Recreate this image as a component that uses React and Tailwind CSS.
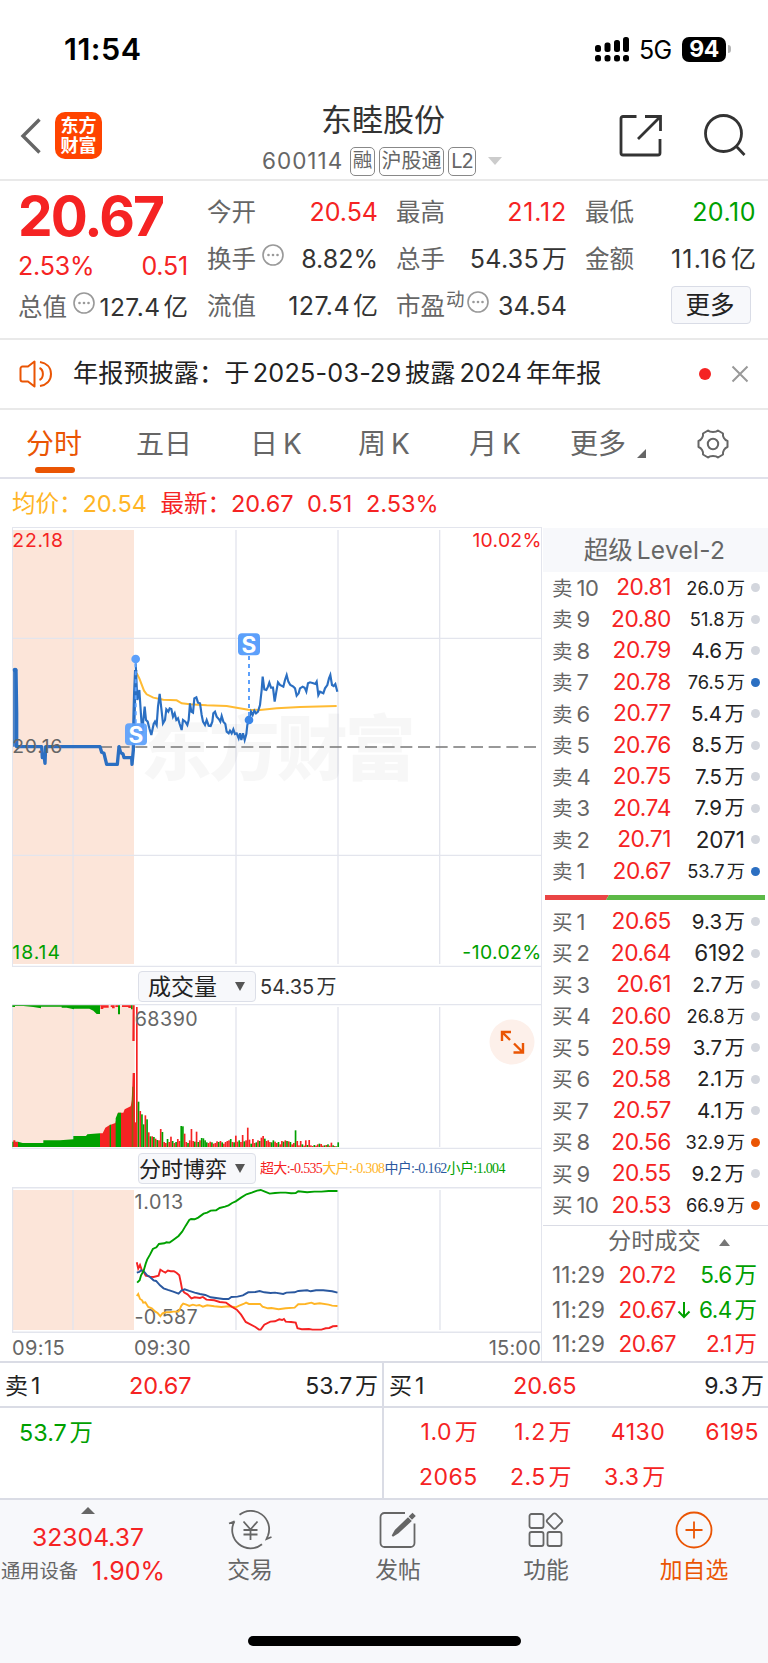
import clsx from "clsx";

const asks = [
  ["卖10", "20.81", "26.0", "gray"],
  ["卖9", "20.80", "51.8", "gray"],
  ["卖8", "20.79", "4.6", "gray"],
  ["卖7", "20.78", "76.5", "blue"],
  ["卖6", "20.77", "5.4", "gray"],
  ["卖5", "20.76", "8.5", "gray"],
  ["卖4", "20.75", "7.5", "gray"],
  ["卖3", "20.74", "7.9", "gray"],
  ["卖2", "20.71", "2071", "gray"],
  ["卖1", "20.67", "53.7", "blue"],
];

const bids = [
  ["买1", "20.65", "9.3", "gray"],
  ["买2", "20.64", "6192", "gray"],
  ["买3", "20.61", "2.7", "gray"],
  ["买4", "20.60", "26.8", "gray"],
  ["买5", "20.59", "3.7", "gray"],
  ["买6", "20.58", "2.1", "gray"],
  ["买7", "20.57", "4.1", "gray"],
  ["买8", "20.56", "32.9", "orange"],
  ["买9", "20.55", "9.2", "gray"],
  ["买10", "20.53", "66.9", "orange"],
];

// one bar per minute: height, sign is the colour (+ red, - green)
const volumes = [
  420, -136, 108, -98, -68, 95, -83, 44, -32, 32, -30, 25, -21, 20, 54, -45, 15, 12, -24, 15, 31, -18, 12,
  -15, 24, 18, -63, -62, 40, 15, -12, 20, 54, 18, -16, 46, -15, 20, -27, -26, -20, -14, 12, 16, -14, 10, 12,
  17, -15, 18, -14, 10, 15, 18, 20, -24, 15, -14, 34, 16, -20, 15, 36, -17, 20, 58, 22, -10, 24, 12, -14,
  20, -18, 28, 33, -25, 18, 20, 15, -14, -20, 16, 12, -15, 8, 18, -16, 20, -18, 17, -15, 8, 12, -50, 18, 5,
  18, -8, 4, 20, -6, 21, 5, 3, -6, 4, 8, -10, 9, 4, -5, 6, -8, 4, 13, -5, 3, -2, -14,
];

const priceLine =
  "407,430 412,540 418,510 424,600 427,640 430,600 434,560 438,600 443,605 448,625 454,645 461,612 465,605 470,615 474,560 479,522 484,565 489,610 495,600 499,568 505,575 509,565 514,567 519,590 524,580 529,600 534,595 539,612 545,630 549,600 556,605 562,615 566,600 570,550 574,575 579,578 583,535 589,532 594,548 600,550 605,585 609,605 615,615 620,600 626,617 632,618 637,605 640,580 645,575 650,590 657,598 661,605 665,588 670,605 676,612 680,635 686,640 690,632 695,640 700,628 705,642 710,640 716,655 720,640 724,660 729,640 734,660 739,642 742,615 747,600 753,575 758,585 763,572 768,580 774,575 780,555 785,510 788,470 793,508 799,510 804,500 808,488 813,503 819,503 824,545 829,515 834,487 840,495 850,500 855,480 860,465 865,485 871,495 880,500 885,505 890,527 896,520 900,505 908,500 914,503 919,515 924,490 930,487 940,490 946,492 950,485 955,525 960,515 970,520 975,505 982,495 987,475 991,465 996,495 1001,498 1006,492 1012,515";

const averageLine =
  "410,460 418,475 432,512 440,523 460,533 490,539 530,541 545,550 570,553 620,556 680,558 710,563 745,569 780,570 830,565 900,561 1010,558";

const auctionLine =
  "42,450 48,450 50,578 50,680 125,680 127,713 133,713 135,730 137,680 300,680 305,697 312,700 315,713 320,733 352,733 357,680 362,698 369,702 372,713 395,713 396,733 400,690 402,590 404,520 407,450";

function Num({ children, unit = "万" }) {
  return (
    <span className="whitespace-nowrap">
      {children}
      <span className="ml-[0.12em] tracking-normal">{unit}</span>
    </span>
  );
}

function Dots({ className }) {
  return (
    <svg viewBox="0 0 22 22" className={clsx("h-[22px] w-[22px] shrink-0", className)} fill="none" stroke="#999" strokeWidth="1.6">
      <circle cx="11" cy="11" r="10" />
      <g fill="#999" stroke="none">
        <circle cx="6.5" cy="11" r="1.3" />
        <circle cx="11" cy="11" r="1.3" />
        <circle cx="15.5" cy="11" r="1.3" />
      </g>
    </svg>
  );
}

function StatusBar() {
  return (
    <div className="flex h-[98px] items-center justify-between pr-[37px] pl-[64px] text-black">
      <span className="text-[30.500px] font-semibold tracking-[0.5px]">11:54</span>
      <div className="flex items-center">
        <svg width="35" height="25" viewBox="0 0 35 25">
          <rect x="0" y="8" width="6" height="7" rx="2.5" />
          <rect x="9.5" y="5.500" width="6" height="9.500" rx="2.5" />
          <rect x="19" y="3" width="6" height="12" rx="2.5" />
          <rect x="28" y="0" width="6" height="15" rx="2.5" />
          <rect x="0" y="18" width="6" height="6.500" rx="2.5" />
          <rect x="9.5" y="18" width="6" height="6.500" rx="2.5" />
          <rect x="19" y="18" width="6" height="6.500" rx="2.5" />
          <rect x="28" y="18" width="6" height="6.500" rx="2.5" />
        </svg>
        <span className="mt-[2px] ml-[9px] w-[34px] text-[25px] tracking-[-0.6px]">5G</span>
        <span className="ml-[9px] flex h-[25px] w-[44px] items-center justify-center rounded-[7px] bg-black text-[23px] font-bold tracking-[-0.6px] text-white">
          94
        </span>
        <span className="ml-[2px] h-[8px] w-[3px] rounded-r-full bg-[#b5b5b5]" />
      </div>
    </div>
  );
}

function Header() {
  return (
    <div className="flex h-[83px] items-start border-b-2 border-[#e9e9e9]">
      <svg width="22" height="38" viewBox="0 0 22 38" className="mt-[19px] ml-[20px]" fill="none" stroke="#666" strokeWidth="3.4">
        <path d="M19.500 2.500 3 19l16.500 16.500" />
      </svg>
      <div className="mt-[14px] ml-[13px] flex h-[47px] w-[47px] flex-col items-center justify-center rounded-[10px] bg-[#ff4400] text-[18px] leading-[20px] font-bold text-white">
        <span>东方</span>
        <span>财富</span>
      </div>
      <div className="ml-[160px] flex w-[242px] flex-col">
        <span className="ml-[59px] h-[44px] text-[31px] leading-[44px] text-[#333]">东睦股份</span>
        <div className="mt-[4px] flex h-[30px] items-center text-[#666]">
          <span className="w-[88px] text-[22.500px] tracking-[1px]">600114</span>
          <span className="flex h-[29px] w-[25px] items-center justify-center rounded-[5px] border-[1.500px] border-[#888] text-[19.500px]">融</span>
          <span className="ml-[4px] flex h-[29px] w-[65px] items-center justify-center rounded-[5px] border-[1.500px] border-[#888] text-[20px]">沪股通</span>
          <span className="ml-[4px] flex h-[29px] w-[28px] items-center justify-center rounded-[5px] border-[1.500px] border-[#888] text-[20px] tracking-[-1px]">L2</span>
          <svg width="14" height="8" className="ml-[12px] shrink-0">
            <path d="M0 0h14L7 8z" fill="#ccc" />
          </svg>
        </div>
      </div>
      <svg width="44" height="44" viewBox="0 0 44 44" className="mt-[16px] ml-[115px]" fill="none" stroke="#333" strokeWidth="2.8">
        <path d="M17.500 2.500H4a2 2 0 0 0-2 2V39a2 2 0 0 0 2 2h35a2 2 0 0 0 2-2V25M41.500 17V2.500H26M41 3 19 25" />
      </svg>
      <svg width="44" height="44" viewBox="0 0 44 44" className="mt-[15px] ml-[40px]" fill="none" stroke="#333" strokeWidth="2.8">
        <circle cx="20.500" cy="20.500" r="18" />
        <path d="m33 33 8.500 9" />
      </svg>
    </div>
  );
}

function Cell({ label, children, extra, color = "text-[#333]", track = "tracking-[0px]" }) {
  return (
    <div className="flex h-[47px] items-center justify-between">
      <span className="-ml-px flex items-center text-[24.500px] text-[#666]">
        {label}
        {extra}
      </span>
      <span className={clsx("-mr-px text-[25px]", color, track)}>{children}</span>
    </div>
  );
}

function Quote() {
  return (
    <div className="grid h-[159px] grid-cols-4 gap-x-5 border-b-2 border-[#e9e9e9] pt-[8px] pr-[13px] pl-[19px]">
      <div className="text-[#f52323]">
        <div className="-ml-px flex h-[54px] items-center text-[55px] font-bold tracking-[-1.900px]">20.67</div>
        <div className="-ml-px flex h-[47px] items-center justify-between text-[25px] tracking-[-0.2px]">
          <span>2.53%</span>
          <span>0.51</span>
        </div>
        <div className="-ml-px flex h-[34px] items-center justify-between text-[24.500px] text-[#333]">
          <span className="text-[#666]">总值</span>
          <Dots className="mb-[9px] ml-[6px]" />
          <span className="ml-auto tracking-[0.5px]">
            <Num unit="亿">127.4</Num>
          </span>
        </div>
      </div>
      <div>
        <Cell label="今开" color="text-[#f52323]">20.54</Cell>
        <Cell label="换手" extra={<Dots className="mb-[9px] ml-[6px]" />}>8.82%</Cell>
        <Cell label="流值" track="tracking-[0.4px]">
          <Num unit="亿">127.4</Num>
        </Cell>
      </div>
      <div>
        <Cell label="最高" color="text-[#f52323]" track="tracking-[0.8px]">21.12</Cell>
        <Cell label="总手" track="tracking-[0.3px]">
          <Num>54.35</Num>
        </Cell>
        <Cell
          label="市盈"
          extra={
            <>
              <span className="mb-[14px] ml-[1px] text-[18.500px]">动</span>
              <Dots className="mb-[9px] ml-[2px]" />
            </>
          }
        >
          34.54
        </Cell>
      </div>
      <div>
        <Cell label="最低" color="text-[#00a000]" track="tracking-[0.5px]">20.10</Cell>
        <Cell label="金额" track="tracking-[1.200px]">
          <Num unit="亿">11.16</Num>
        </Cell>
        <div className="flex h-[47px] items-center justify-end pr-[4px] pb-[3px]">
          <span className="flex h-[38px] w-[80px] items-center justify-center rounded-[4px] border-[1.500px] border-[#d9dce6] bg-[#f7f8fb] pr-[2px] text-[24.500px] text-[#222]">更多</span>
        </div>
      </div>
    </div>
  );
}

function Notice() {
  return (
    <div className="flex h-[70px] items-center border-b-2 border-[#e9e9e9] pl-[19px]">
      <svg width="34" height="28" viewBox="0 0 34 28" fill="none" stroke="#ea5504" strokeWidth="2" strokeLinejoin="round">
        <path d="M15.500 1.500v25L9 21.500H3.500a2 2 0 0 1-2-2v-11a2 2 0 0 1 2-2H9z" />
        <path d="M20.500 8c4.500 2 4.500 10 0 12M21 2c6 1 11 5 11 12s-5 11-11 12" />
      </svg>
      <span className="ml-[20px] w-[541px] text-[25.200px] whitespace-nowrap text-[#222]">
        年报预披露：于<span className="mx-[3.500px] tracking-[0.2px]">2025-03-29</span>披露<span className="mx-[4px] tracking-[0px]">2024</span>年年报
      </span>
      <span className="ml-[85px] h-[12px] w-[12px] rounded-full bg-[#f52323]" />
      <svg width="18" height="18" viewBox="0 0 18 18" className="ml-[20px]" stroke="#999" strokeWidth="2">
        <path d="m1.500 1.500 15 15M16.500 1.500l-15 15" />
      </svg>
    </div>
  );
}

function Tabs() {
  return (
    <div className="flex h-[69px] items-center border-b-2 border-[#e0e1ea] text-[28px] text-[#666]">
      <div className="ml-[26px] flex h-full w-[110px] flex-col text-[#ea5504]">
        <span className="mt-[13px] h-[42px] leading-[42px]">分时</span>
        <span className="mt-[2px] ml-[9px] h-[6px] w-[40px] rounded-full bg-[#ea5504]" />
      </div>
      <span className="mt-px w-[114px]">五日</span>
      <span className="mt-px w-[108px]">日<span className="ml-[5px]">K</span></span>
      <span className="mt-px w-[111px]">周<span className="ml-[5px]">K</span></span>
      <span className="mt-px w-[101px]">月<span className="ml-[5px]">K</span></span>
      <span className="mt-px w-[67px]">更多</span>
      <svg width="9" height="9" className="mt-[19px]">
        <path d="M9 0v9H0z" fill="#666" />
      </svg>
      <svg width="34" height="32" viewBox="0 0 34 32" className="ml-[50px]" fill="none" stroke="#666" strokeWidth="2" strokeLinejoin="round">
        <path d="M12 2.500c2 2 8 2 10 0l5 3c-.6 3 1.500 6.500 4.500 7.500v6c-3 1-5 4.500-4.500 7.500l-5 3c-2-2-8-2-10 0l-5-3c.6-3-1.500-6.500-4.500-7.500v-6c3-1 5-4.500 4.500-7.500z" />
        <circle cx="17" cy="16" r="5.200" />
      </svg>
    </div>
  );
}

function PriceChart() {
  return (
    <svg width="529" height="440" viewBox="36 21 1587 1320" className="block shrink-0">
      <rect x="37" y="30" width="365" height="1302" fill="#fce5d9" />
      <g stroke="#e3e5ed" strokeWidth="4">
        <path d="M37 22H1625M37 22V1341M219 30V1332M708 30V1332M1014 30V1332M1319 30V1332M37 355H1625M37 1006H1625M37 1339H1625" />
      </g>
      <text x="422" y="762" fontSize="213" letterSpacing="-9" fontWeight="900" fill="#000" fillOpacity="0.03">东方财富</text>
      <path d="M300 681H1620" stroke="#777" strokeWidth="5" strokeDasharray="36 17" />
      <polyline points={averageLine} fill="none" stroke="#ffbb33" strokeWidth="6" />
      <polyline points={auctionLine} fill="none" stroke="#2b6fc2" strokeWidth="10" strokeLinejoin="round" />
      <path d="M42 450V680" stroke="#2b6fc2" strokeWidth="5" />
      <polyline points={priceLine} fill="none" stroke="#2b6fc2" strokeWidth="6.500" />
      <circle cx="45" cy="450" r="7" fill="#2b6fc2" />
      <g stroke="#5ca0fb" strokeWidth="6" strokeDasharray="12 12">
        <path d="M407 430V610M747 408V590" />
      </g>
      <g fill="#5ca0fb">
        <circle cx="407" cy="417" r="13" />
        <circle cx="747" cy="600" r="13" fill="#3a86e8" />
        <rect x="375" y="610" width="66" height="66" rx="12" fillOpacity="0.93" />
        <rect x="714" y="340" width="66" height="66" rx="12" />
      </g>
      <g fill="#fff" fontSize="68" fontWeight="700" textAnchor="middle">
        <text x="408" y="668">S</text>
        <text x="747" y="398">S</text>
      </g>
      <g fontSize="58">
        <text x="37" y="80" fill="#f52323" letterSpacing="2.500">22.18</text>
        <text x="37" y="699" fill="#666" letterSpacing="2">20.16</text>
        <text x="37" y="1318" fill="#00a000" letterSpacing="3">18.14</text>
        <text x="1625" y="80" fill="#f52323" letterSpacing=".8" textAnchor="end">10.02%</text>
        <text x="1625" y="1318" fill="#00a000" letterSpacing="1.200" textAnchor="end">-10.02%</text>
      </g>
    </svg>
  );
}

function Picker({ children, className }) {
  return (
    <div className={clsx("ml-[126px] flex h-[31px] w-[118px] items-center justify-between rounded-[4px] border-[1.500px] border-[#dcdfe8] bg-[#f7f8fb] pr-[10px] text-[#222]", className)}>
      <span className="mt-[2px]">{children}</span>
      <svg width="10" height="9">
        <path d="M0 0h10L5 9z" fill="#555" />
      </svg>
    </div>
  );
}

function VolumeChart() {
  return (
    <svg width="529" height="145" viewBox="36 132 1587 435" className="block">
      <rect x="37" y="136" width="367" height="425" fill="#fce5d9" />
      <path d="M37 134H1625M37 134V567M219 141V561M708 141V561M1014 141V561M1319 141V561M37 565H1625" stroke="#e3e5ed" strokeWidth="4" />
      {/* call auction, unmatched on top and matched at the bottom */}
      <path d="M37 136H300V162H290L280 152 268 146H222V148L200 143H185V140H123V145L100 141 70 138H45V141H37zM354 136H360V163H354zM393 136H398V148H393z" fill="#00a000" />
      <path d="M300 136H326V143H310V147H302V140zM332 136H344V145H336V141H332zM346 136H354V141H346zM366 136H393V144H385V141H366zM398 136H404V243H397z" fill="#f52323" />
      <path d="M37 561V545H54L68 549H130V541H180L220 538V528H258L262 523 300 520V561z" fill="#00a000" />
      <path d="M40 561V541H46V546H54V561z" fill="#f52323" />
      <path d="M300 561V520H308L316 503 328 496 346 489 354 458H370L374 448 392 439 396 420 398 339H405V561z" fill="#f52323" />
      <path d="M347 561V475L354 458H363V561zM329 561V494H333V561z" fill="#00a000" />
      <path d="M395 561V420L397 380H400V561z" fill="#8a6410" />
      <path d="M404 487H410V561H404z" fill="#f52323" />
      {volumes.map((v, i) => (
        <rect key={i} x={408 + i * 5.12} y={561 - Math.abs(v)} width="5" height={Math.abs(v)} fill={v > 0 ? "#f52323" : "#00a000"} />
      ))}
      <text x="404" y="199" fill="#666" fontSize="59" letterSpacing="1.500">68390</text>
    </svg>
  );
}

function ForceChart() {
  return (
    <svg width="529" height="146" viewBox="0 0 529 146" className="block shrink-0">
      <rect x="0.500" y="3" width="121.500" height="140" fill="#fce5d9" />
      <path d="M0 .7H530M.5 0V146M61 3V143M224 3V143M326 3V143M428 3V143M0 145.300H530" stroke="#e3e5ed" strokeWidth="1.400" />
      <g fill="#666" fontSize="19.700">
        <text x="122.500" y="22.300" letterSpacing=".7">1.013</text>
        <text x="122.500" y="137" letterSpacing=".3">-0.587</text>
      </g>
      <g transform="translate(-12 -36.700) scale(.35714 .33333)" fill="none" strokeWidth="1.900">
        <polyline vectorEffect="non-scaling-stroke" stroke="#ffb526" points="383,437 387,431 392,446 398,450 401,457 407,456 415,470 425,474 435,484 442,489 449,498 455,489 465,486 475,486 485,484 500,484 505,473 508,466 513,460 522,463 530,467 540,463 550,466 558,464 568,469 580,465 600,468 620,470 640,468 660,471 670,466 682,461 689,457 697,461 728,461 735,469 750,474 760,473 780,477 800,474 825,472 835,462 855,461 872,457 880,461 895,459 920,463 930,466 945,467" />
        <polyline vectorEffect="non-scaling-stroke" stroke="#f52323" points="383,336 387,355 392,344 398,362 403,366 408,376 420,379 430,380 444,376 449,358 456,363 463,367 470,361 478,363 487,363 495,368 502,375 506,395 510,418 516,427 525,432 536,444 545,441 560,443 568,440 578,448 600,450 615,455 633,457 650,470 663,478 675,493 688,515 697,520 715,530 725,538 730,538 740,523 757,514 770,513 782,507 790,509 795,506 800,514 815,515 828,517 833,534 845,537 865,536 875,538 900,538 912,534 922,533 932,528 945,527" />
        <polyline vectorEffect="non-scaling-stroke" stroke="#2a589f" points="383,367 390,365 395,360 402,362 412,375 420,380 430,390 437,392 448,405 458,414 470,419 485,424 500,430 508,421 517,417 530,422 545,427 560,431 575,434 590,441 610,444 625,446 640,446 648,440 665,439 680,435 695,426 715,425 727,422 740,426 758,428 770,427 793,431 802,427 825,426 835,422 860,420 870,423 885,420 905,420 930,423 945,427" />
        <polyline vectorEffect="non-scaling-stroke" stroke="#00a000" points="384,397 391,390 395,375 402,362 408,340 412,328 420,313 428,296 438,291 445,281 460,279 466,276 475,277 485,269 500,257 510,244 520,226 530,209 535,206 545,207 555,202 570,190 580,187 590,181 605,180 615,173 630,169 640,165 650,158 660,153 675,142 690,132 705,127 720,121 730,119 740,123 755,130 770,128 785,127 800,127 815,129 828,128 835,123 860,126 880,124 900,124 920,122 945,122" />
      </g>
    </svg>
  );
}

const dotColor = { gray: "bg-[#d3d6dd]", blue: "bg-[#2b6fc2]", orange: "bg-[#ea5504]" };

function BookRow({ row }) {
  const [name, price, vol, dot] = row;
  const isPlain = !vol.includes(".");
  const isWide = vol.length === 4 && !isPlain;
  return (
    <div className="flex h-[31.500px] items-center pr-[8px] pl-[9px]">
      <span className="w-[52px] text-[20.500px] whitespace-nowrap text-[#666]">
        {name[0]}
        <span className="ml-[4px] text-[22px] tracking-[-0.4px]">{name.slice(1)}</span>
      </span>
      <span className="w-[67px] text-right text-[22.700px] tracking-[-0.4px] text-[#f52323]">{price}</span>
      <span className={clsx("w-[74px] text-right text-[#222]", isPlain ? "text-[22.500px]" : isWide ? "text-[18.300px]" : "text-[20.500px]")}>
        {isPlain ? vol : <Num>{vol}</Num>}
      </span>
      <span className={clsx("ml-auto h-[9px] w-[9px] rounded-full", dotColor[dot])} />
    </div>
  );
}

function OrderBook() {
  return (
    <div className="w-[227px] border-l-[1.500px] border-[#e3e5ed] pl-[1px]">
      <div className="mt-[1px] flex h-[44px] items-center justify-center bg-[#f7f8fb] pr-[2px] text-[24.500px] text-[#666]">
        超级<span className="ml-[4px] tracking-[0.3px]">Level-2</span>
      </div>
      {asks.map((row) => (
        <BookRow key={row[0]} row={row} />
      ))}
      <svg width="220" height="5" className="mt-[8px] ml-[2px] block">
        <path d="M0 0H64L61 5H0z" fill="#ea4545" />
        <path d="M64 0H220V5H61z" fill="#5cb947" />
      </svg>
      <div className="h-[6px]" />
      {bids.map((row) => (
        <BookRow key={row[0]} row={row} />
      ))}
      <div className="mt-[4px] flex h-[33px] items-center border-t-[1.500px] border-[#dadce5] pl-[65px] text-[23.200px] text-[#666]">
        分时成交
        <svg width="11" height="7" className="ml-[18px]">
          <path d="M0 7h11L5.500 0z" fill="#777" />
        </svg>
      </div>
      {[
        ["20.72", "", "5.6", "text-[#00a000]"],
        ["20.67", "↓", "6.4", "text-[#00a000]"],
        ["20.67", "", "2.1", "text-[#f52323]"],
      ].map(([price, arrow, vol, color], i) => (
        <div key={i} className="flex h-[34.500px] items-center pl-[9px] text-[22.500px]">
          <span className="w-[54px] tracking-[0.1px] text-[#666]">11:29</span>
          <span className="w-[70px] text-right tracking-[-0.5px] text-[#f52323]">{price}</span>
          <span className="w-[16px]">
            {arrow && (
              <svg width="14" height="18" viewBox="0 0 14 18" className="ml-[1px]" fill="none" stroke="#00a000" strokeWidth="2">
                <path d="M7 1v15M1.500 10.500 7 16l5.500-5.500" />
              </svg>
            )}
          </span>
          <span className={clsx("w-[65px] text-right tracking-[-0.5px]", color)}>
            <Num>{vol}</Num>
          </span>
        </div>
      ))}
    </div>
  );
}

function Market() {
  return (
    <div className="flex h-[834px]">
      <div className="flex w-[541px] flex-col pl-[12px]">
        <PriceChart />
        <div className="flex h-[37px] shrink-0 items-center pt-px">
          <Picker className="pl-[9px] text-[23px]">成交量</Picker>
          <span className="mt-[2px] ml-[4px] text-[20px] text-[#333]">
            <Num>54.35</Num>
          </span>
        </div>
        <div className="relative shrink-0">
          <VolumeChart />
          <svg width="46" height="46" viewBox="0 0 46 46" className="absolute top-[15px] left-[477px]" fill="none" stroke="#ea5504" strokeWidth="2.400">
            <circle cx="23" cy="23" r="22.500" fill="#fdf0ea" stroke="none" />
            <path d="M13 22V13H22M13.500 13.500 21 21M34 24V33.500H24.500M33.500 33 25 24.500" />
          </svg>
        </div>
        <div className="flex h-[38px] shrink-0 items-center">
          <Picker className="text-[22px]">分时博弈</Picker>
          <span className="mt-[1px] ml-[4px] font-['Liberation_Serif','Noto_Sans_CJK_SC',serif] text-[14px] tracking-[-0.65px] whitespace-nowrap">
            <span className="text-[#f52323]">超大:-0.535</span>
            <span className="text-[#ffb526]">大户:-0.308</span>
            <span className="text-[#2a589f]">中户:-0.162</span>
            <span className="text-[#00a000]">小户:1.004</span>
          </span>
        </div>
        <ForceChart />
        <div className="flex h-[28px] items-center pt-[2px] text-[20px] tracking-[0.2px] text-[#666]">
          <span className="w-[122px] tracking-[0.4px]">09:15</span>
          <span>09:30</span>
          <span className="ml-auto">15:00</span>
        </div>
      </div>
      <OrderBook />
    </div>
  );
}

function TopOfBook({ name, price, vol }) {
  return (
    <div className="flex h-[45px] items-center border-b-2 border-[#dadce5] pt-[3px] pr-[4px] pl-[5px] text-[23px] text-[#222]">
      <span className="w-[124px]">
        {name}
        <span className="ml-[3px]">1</span>
      </span>
      <span className="text-[23.500px] text-[#f52323]">{price}</span>
      <span className="ml-auto">
        <Num>{vol}</Num>
      </span>
    </div>
  );
}

function Queue() {
  return (
    <div className="flex h-[139px] border-y-2 border-[#dadce5]">
      <div className="w-[384px] border-r-2 border-[#dadce5]">
        <TopOfBook name="卖" price="20.67" vol="53.7" />
        <div className="flex h-[49px] items-center pl-[19px] text-[23.400px] text-[#00a000]">
          <Num>53.7</Num>
        </div>
      </div>
      <div className="w-[384px]">
        <TopOfBook name="买" price="20.65" vol="9.3" />
        <div className="grid h-[92px] grid-cols-4 items-center pt-[2px] pr-[9px] text-right text-[23px] tracking-[0.5px] text-[#f52323]">
          <Num>1.0</Num>
          <Num>1.2</Num>
          <span>4130</span>
          <span>6195</span>
          <span>2065</span>
          <Num>2.5</Num>
          <Num>3.3</Num>
        </div>
      </div>
    </div>
  );
}

function NavItem({ label, children, className }) {
  return (
    <div className={clsx("flex w-[148px] flex-col items-center pt-[10px] text-[22.800px]", className)}>
      <svg width="44" height="40" viewBox="0 0 44 40" fill="none" stroke="currentColor" strokeWidth="1.800">
        {children}
      </svg>
      <span className="mt-[3px] leading-[34px]">{label}</span>
    </div>
  );
}

function BottomNav() {
  return (
    <div className="flex flex-1 flex-col bg-[#f7f8fb] text-[#666]">
      <div className="flex h-[136px]">
        <div className="flex w-[176px] flex-col items-center pt-[7px]">
          <svg width="14" height="7">
            <path d="M0 7h14L7 0z" fill="#666" />
          </svg>
          <span className="mt-[6px] h-[34px] text-[24.700px] leading-[34px] text-[#f52323]">32304.37</span>
          <div className="flex h-[35px] items-center self-start pl-[1px]">
            <span className="w-[91px] text-[19.300px]">通用设备</span>
            <span className="text-[25px] text-[#f52323]">1.90%</span>
          </div>
        </div>
        <NavItem label="交易">
          <path d="M11.500 4.800A18.300 18.300 0 0 1 40 25.500M40.200 25l-1.700 4 5-2M34 34.300A18.300 18.300 0 0 1 6.500 11.200M1 13.500l5.700-2.200M15.500 11.500l7 8 7-8M22.500 19.500v10.500M15.500 20h14M15.500 24.500h14" />
        </NavItem>
        <NavItem label="发帖">
          <path d="M29 3H8.500A4 4 0 0 0 4.500 7v26a4 4 0 0 0 4 4h26a4 4 0 0 0 4-4V13.500" />
          <path d="m16.500 26 3-5.500L32 8.500l2.500 2.500L22 22.500zM34 6.500l2.500-2.500 2 2-2.500 2.500z" fill="currentColor" />
        </NavItem>
        <NavItem label="功能">
          <rect x="5.500" y="4" width="14" height="14" rx="2" />
          <rect x="5.500" y="22" width="14" height="14" rx="2" />
          <rect x="23.500" y="22" width="14" height="14" rx="2" />
          <rect x="24.500" y="5" width="12" height="12" rx="2" transform="rotate(45 30.500 11)" />
        </NavItem>
        <NavItem label="加自选" className="text-[#ea5504]">
          <circle cx="22" cy="20" r="17.500" />
          <path d="M13.500 20h17M22 11.500v17" />
        </NavItem>
      </div>
      <div className="h-[10px] w-[273px] self-center rounded-full bg-black" />
    </div>
  );
}

function App() {
  return (
    <div className="flex h-[1663px] w-[768px] flex-col overflow-hidden bg-white font-['Inter','Noto_Sans_CJK_SC',sans-serif] leading-none">
      <StatusBar />
      <Header />
      <Quote />
      <Notice />
      <Tabs />
      <div className="flex h-[48px] items-center gap-x-[13.500px] pt-[1px] pl-[12px] text-[23.500px] text-[#f52323]">
        <span className="text-[#ffb526]">
          均价：<span>20.54</span>
        </span>
        <span>
          最新：<span>20.67</span>
        </span>
        <span className="tracking-[0.2px]">0.51</span>
        <span>2.53%</span>
      </div>
      <Market />
      <Queue />
      <BottomNav />
    </div>
  );
}

export default App;
